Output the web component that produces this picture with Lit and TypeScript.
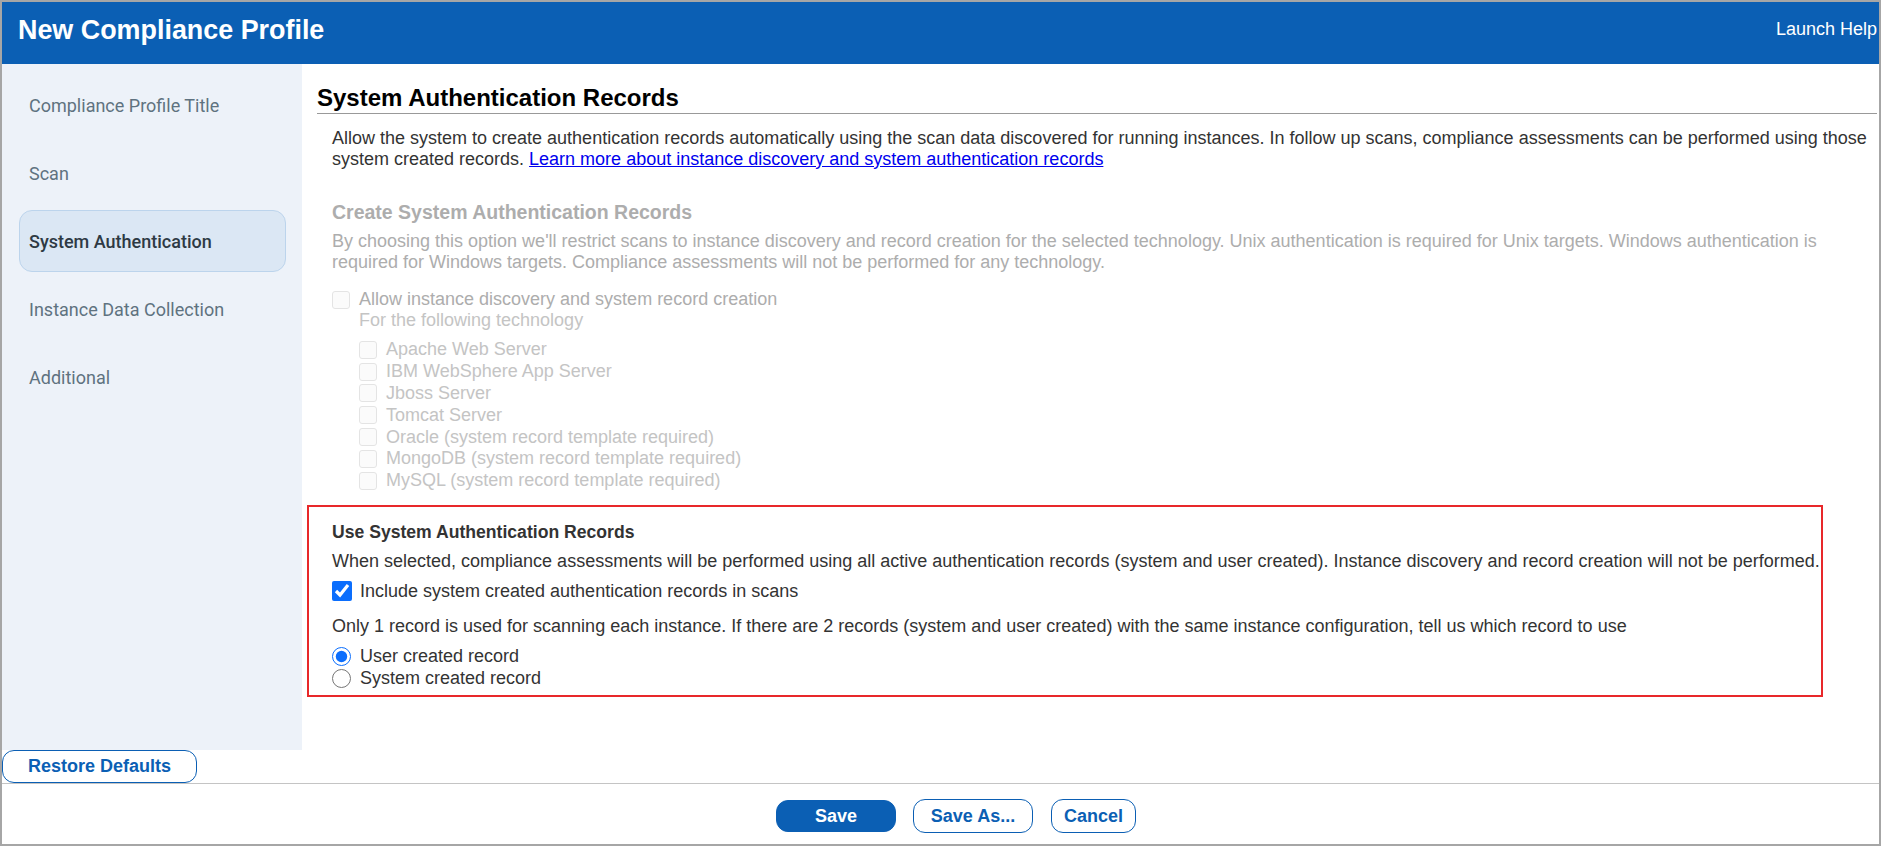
import { LitElement, html, css } from "lit";
import { customElement } from "lit/decorators.js";

const NAV = ["Compliance Profile Title", "Scan", "System Authentication", "Instance Data Collection", "Additional"];
const TECH = [
  "Apache Web Server",
  "IBM WebSphere App Server",
  "Jboss Server",
  "Tomcat Server",
  "Oracle (system record template required)",
  "MongoDB (system record template required)",
  "MySQL (system record template required)",
];

@customElement("app-root")
export class AppRoot extends LitElement {
  static styles = css`
    :host {
      display: block;
      width: 1881px;
      height: 846px;
      font-family: "Liberation Sans", Arial, sans-serif;
      font-size: 18px;
      line-height: 21px;
      color: #333;
      background: #fff;
    }
    * { box-sizing: border-box; }
    .frame {
      width: 100%;
      height: 100%;
      border: 2px solid #a6a6a6;
      display: flex;
      flex-direction: column;
    }
    header {
      height: 62px;
      flex: none;
      background: #0b5fb4;
      color: #fff;
      display: flex;
      justify-content: space-between;
      padding-left: 16px;
      padding-right: 2px;
    }
    .title {
      font-weight: 700;
      font-size: 26.9px;
      line-height: 56px;
    }
    .help {
      font-size: 18px;
      line-height: 54px;
      white-space: nowrap;
    }
    .body {
      flex: none;
      height: 686px;
      display: flex;
    }
    nav {
      width: 300px;
      flex: none;
      background: #edf2f9;
      padding: 10px 15px 0 17px;
      display: flex;
      flex-direction: column;
      gap: 6px;
    }
    .nav-item {
      height: 62px;
      width: 267px;
      padding-left: 9px;
      display: flex;
      align-items: center;
      border: 1px solid transparent;
      border-radius: 13px;
      font-family: Roboto, "Liberation Sans", sans-serif;
      font-size: 18px;
      color: #5f7280;
    }
    .nav-item.active {
      background: #dbe7f4;
      border-color: #bcd4ec;
      color: #2e3a44;
      font-weight: 500;
    }
    main {
      flex: 1;
      padding: 20px 2px 0 15px;
      min-width: 0;
    }
    h1 {
      margin: 0;
      font-size: 24px;
      line-height: 28px;
      font-weight: 700;
      color: #000;
      border-bottom: 1px solid #999;
      height: 30px;
    }
    .sec { padding-left: 15px; }
    .intro { margin: 14px 0 0; padding-right: 4px; }
    a { color: #0000ee; text-decoration: underline; }
    h2 {
      margin: 0;
      font-size: 19.5px;
      line-height: 24px;
      font-weight: 700;
    }
    .disabled { color: #b7b7b7; margin-top: 30px; }
    .disabled h2 { color: #adadad; }
    .disabled .desc { margin: 7px 0 0; color: #adadad; padding-right: 30px; }
    .row { display: flex; align-items: center; gap: 9px; }
    .allow { margin-top: 16px; color: #adadad; }
    .sub { padding-left: 27px; color: #c4c4c4; margin-top: 0; }
    .techs { margin-top: 8px; padding-left: 27px; display: flex; flex-direction: column; }
    .tech { height: 21.8px; gap: 9px; color: #c4c4c4; }
    .box {
      width: 18px;
      height: 18px;
      flex: none;
      border: 1px solid #e4e4e4;
      border-radius: 3px;
      background: #fbfbfb;
    }
    .callout {
      margin: 13px 0 0 -25px;
      width: 1516px;
      height: 192px;
      border: 2px solid #e8282a;
      padding: 13px 0 0 23px;
    }
    .callout h3 {
      margin: 0;
      font-size: 17.6px;
      line-height: 24px;
      font-weight: 700;
      color: #333;
    }
    .callout p { margin: 0; }
    .p1 { margin-top: 7px !important; }
    .inc { margin-top: 9px; gap: 8px; }
    .p2 { margin-top: 14px !important; }
    .radios { margin-top: 9px; display: flex; flex-direction: column; gap: 1px; }
    input {
      margin: 0;
      flex: none;
      accent-color: #0b6efd;
    }
    input[type="checkbox"] { width: 20px; height: 20px; }
    input[type="radio"] { width: 19px; height: 19px; }
    .foot-left {
      height: 34px;
      flex: none;
      border-bottom: 1px solid #c4c4c4;
    }
    button {
      font-family: "Liberation Sans", Arial, sans-serif;
      font-size: 18px;
      font-weight: 700;
      color: #0b5fb4;
      background: #fff;
      border: 1.5px solid #0b5fb4;
      border-radius: 12px;
      padding: 0;
      height: 34px;
      display: block;
    }
    .restore { width: 195px; height: 33px; }
    .actions {
      flex: 1;
      padding: 15px 0 0 774px;
      display: flex;
      align-items: flex-start;
      gap: 17px;
    }
    .save { width: 120px; height: 32px; margin-top: 1px; background: #0b5fb4; color: #fff; }
    .saveas { width: 120px; }
    .cancel { width: 85px; margin-left: 1px; }
  `;

  render() {
    return html`
      <div class="frame">
        <header>
          <div class="title">New Compliance Profile</div>
          <div class="help">Launch Help</div>
        </header>
        <div class="body">
          <nav>
            ${NAV.map(
              (n) => html`<div class="nav-item ${n === "System Authentication" ? "active" : ""}">${n}</div>`
            )}
          </nav>
          <main>
            <h1>System Authentication Records</h1>
            <div class="sec">
              <p class="intro">
                Allow the system to create authentication records automatically using the scan data discovered for running instances. In follow up scans, compliance assessments can be performed using those system created records.
                <a href="#">Learn more about instance discovery and system authentication records</a>
              </p>
              <div class="disabled">
                <h2>Create System Authentication Records</h2>
                <p class="desc">
                  By choosing this option we'll restrict scans to instance discovery and record creation for the selected technology. Unix authentication is required for Unix targets. Windows authentication is required for Windows targets. Compliance assessments will not be performed for any technology.
                </p>
                <div class="row allow"><span class="box"></span><span>Allow instance discovery and system record creation</span></div>
                <div class="sub">For the following technology</div>
                <div class="techs">
                  ${TECH.map((t) => html`<div class="row tech"><span class="box"></span><span>${t}</span></div>`)}
                </div>
              </div>
              <section class="callout">
                <h3>Use System Authentication Records</h3>
                <p class="p1">When selected, compliance assessments will be performed using all active authentication records (system and user created). Instance discovery and record creation will not be performed.</p>
                <label class="row inc"><input type="checkbox" checked /><span>Include system created authentication records in scans</span></label>
                <p class="p2">Only 1 record is used for scanning each instance. If there are 2 records (system and user created) with the same instance configuration, tell us which record to use</p>
                <div class="radios">
                  <label class="row"><input type="radio" name="r" checked /><span>User created record</span></label>
                  <label class="row"><input type="radio" name="r" /><span>System created record</span></label>
                </div>
              </section>
            </div>
          </main>
        </div>
        <div class="foot-left"><button class="restore">Restore Defaults</button></div>
        <div class="actions">
          <button class="save">Save</button>
          <button class="saveas">Save As...</button>
          <button class="cancel">Cancel</button>
        </div>
      </div>
    `;
  }
}
